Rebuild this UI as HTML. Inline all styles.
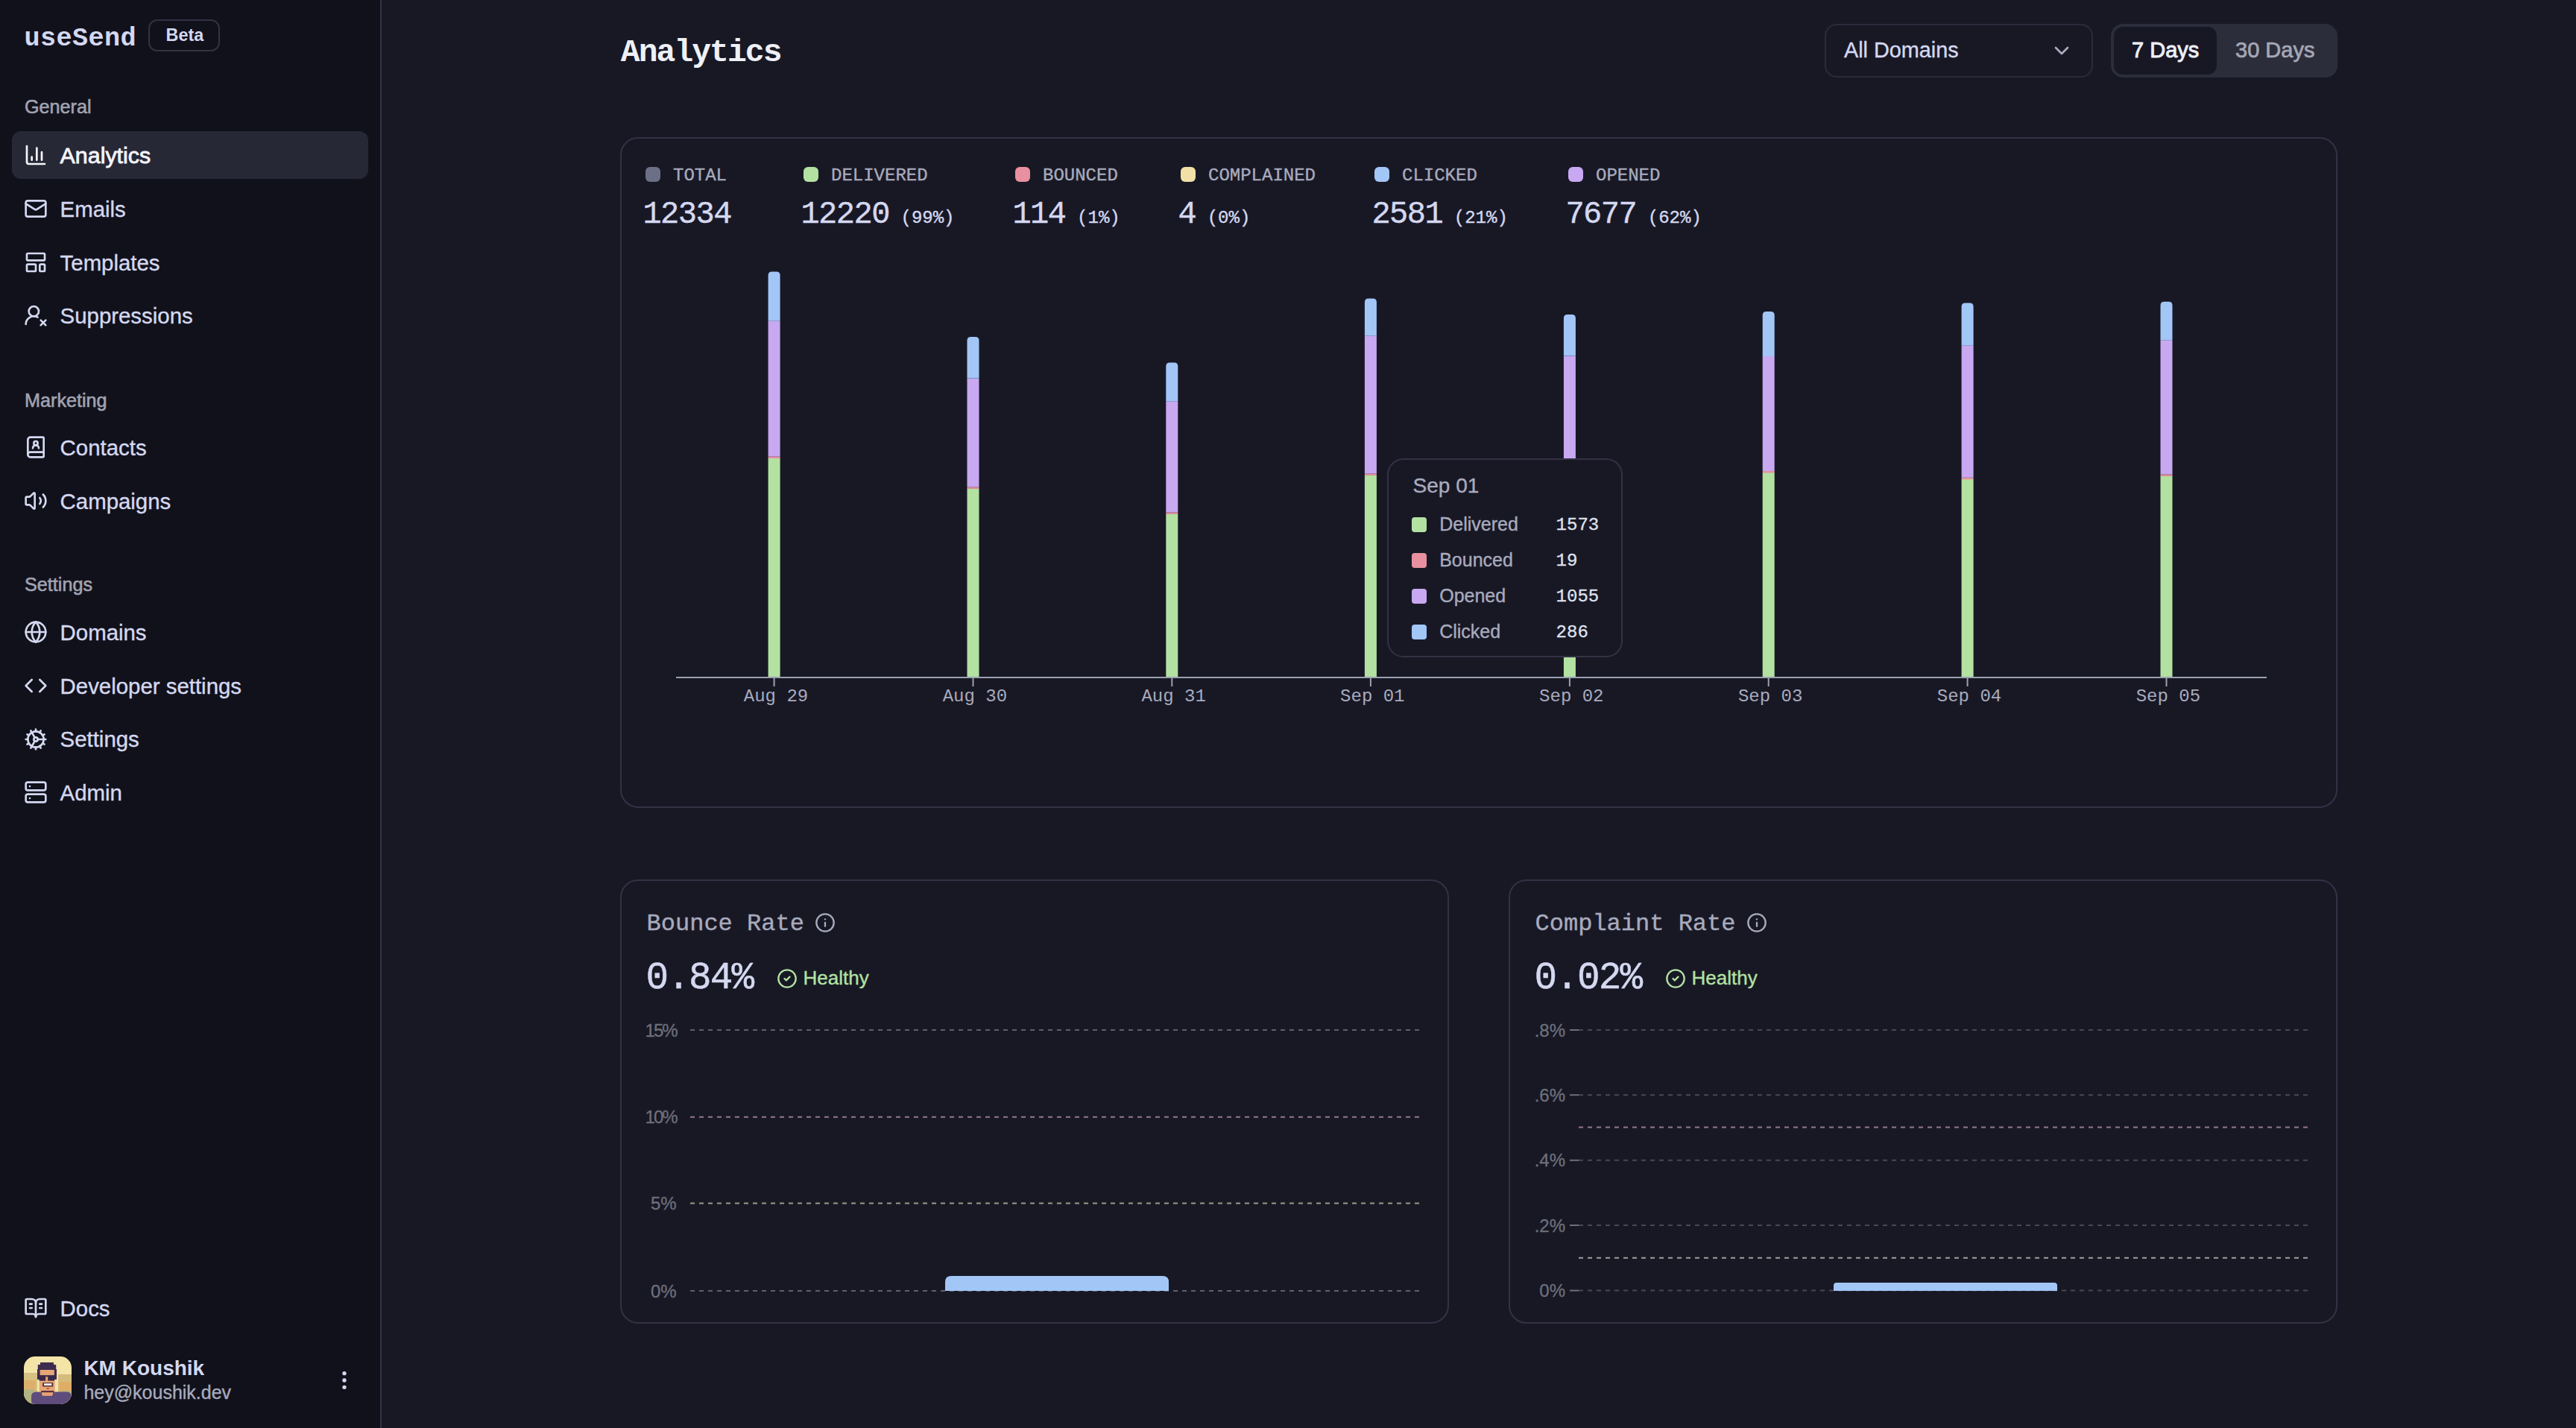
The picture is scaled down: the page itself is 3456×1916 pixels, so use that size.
<!DOCTYPE html><html><head><meta charset="utf-8"><style>
html{zoom:2;}
html,body{margin:0;padding:0;}
body{width:1728px;height:958px;overflow:hidden;position:relative;background:#181825;font-family:'Liberation Sans', sans-serif;}
.t{position:absolute;line-height:1;white-space:nowrap;}
.ic{position:absolute;}
.box{position:absolute;box-sizing:border-box;}
</style></head><body>
<div class="box" style="left:0;top:0;width:256px;height:958px;background:#11111b;border-right:1px solid #313244"></div>
<div class="t" style="left:16.20px;top:17.41px;font-size:17.6px;color:#d4d8f0;font-family:'Liberation Mono', monospace;font-weight:700;letter-spacing:0.2px">useSend</div>
<div class="box" style="left:99.7px;top:13.2px;width:48px;height:21.5px;border:1px solid #313244;border-radius:6px"></div>
<div class="t" style="left:111.30px;top:18.10px;font-size:11.7px;color:#d4d8f0;font-family:'Liberation Sans', sans-serif;font-weight:700;">Beta</div>
<div class="t" style="left:16.50px;top:65.53px;font-size:12.6px;color:#a0a3b1;font-family:'Liberation Sans', sans-serif;font-weight:400;-webkit-text-stroke:0.3px #a0a3b1">General</div>
<div class="box" style="left:8px;top:88px;width:239px;height:32px;background:#272836;border-radius:6px"></div>
<div class="t" style="left:16.50px;top:262.33px;font-size:12.6px;color:#a0a3b1;font-family:'Liberation Sans', sans-serif;font-weight:400;-webkit-text-stroke:0.3px #a0a3b1">Marketing</div>
<div class="t" style="left:16.50px;top:386.23px;font-size:12.6px;color:#a0a3b1;font-family:'Liberation Sans', sans-serif;font-weight:400;-webkit-text-stroke:0.3px #a0a3b1">Settings</div>
<svg class="ic" style="left:16px;top:95.95px" width="16" height="16" viewBox="0 0 24 24" fill="none" stroke="#f5f5fa" stroke-width="2" stroke-linecap="round" stroke-linejoin="round"><path d="M3 3v16a2 2 0 0 0 2 2h16"/><path d="M18 17V9"/><path d="M13 17V5"/><path d="M8 17v-3"/></svg>
<div class="t" style="left:40.30px;top:96.38px;font-size:15.2px;color:#f5f5fa;font-family:'Liberation Sans', sans-serif;font-weight:400;-webkit-text-stroke:0.4px #f5f5fa">Analytics</div>
<svg class="ic" style="left:16px;top:132.1px" width="16" height="16" viewBox="0 0 24 24" fill="none" stroke="#d4d8f0" stroke-width="2" stroke-linecap="round" stroke-linejoin="round"><rect width="20" height="16" x="2" y="4" rx="2"/><path d="m22 7-8.97 5.7a1.94 1.94 0 0 1-2.06 0L2 7"/></svg>
<div class="t" style="left:40.30px;top:132.96px;font-size:14.7px;color:#d4d8f0;font-family:'Liberation Sans', sans-serif;font-weight:400;-webkit-text-stroke:0.18px #d4d8f0;">Emails</div>
<svg class="ic" style="left:16px;top:168.2px" width="16" height="16" viewBox="0 0 24 24" fill="none" stroke="#d4d8f0" stroke-width="2" stroke-linecap="round" stroke-linejoin="round"><rect width="18" height="7" x="3" y="3" rx="1"/><rect width="9" height="7" x="3" y="14" rx="1"/><rect width="5" height="7" x="16" y="14" rx="1"/></svg>
<div class="t" style="left:40.30px;top:169.06px;font-size:14.7px;color:#d4d8f0;font-family:'Liberation Sans', sans-serif;font-weight:400;-webkit-text-stroke:0.18px #d4d8f0;">Templates</div>
<svg class="ic" style="left:16px;top:203.5px" width="16" height="16" viewBox="0 0 24 24" fill="none" stroke="#d4d8f0" stroke-width="2" stroke-linecap="round" stroke-linejoin="round"><path d="M2 21a8 8 0 0 1 11.873-7"/><circle cx="10" cy="8" r="5"/><path d="m17 17 5 5"/><path d="m22 17-5 5"/></svg>
<div class="t" style="left:40.30px;top:204.36px;font-size:14.7px;color:#d4d8f0;font-family:'Liberation Sans', sans-serif;font-weight:400;-webkit-text-stroke:0.18px #d4d8f0;">Suppressions</div>
<svg class="ic" style="left:16px;top:292.2px" width="16" height="16" viewBox="0 0 24 24" fill="none" stroke="#d4d8f0" stroke-width="2" stroke-linecap="round" stroke-linejoin="round"><path d="M15 13a3 3 0 1 0-6 0"/><path d="M4 19.5v-15A2.5 2.5 0 0 1 6.5 2H19a1 1 0 0 1 1 1v18a1 1 0 0 1-1 1H6.5a1 1 0 0 1 0-5H20"/><circle cx="12" cy="8" r="2"/></svg>
<div class="t" style="left:40.30px;top:293.06px;font-size:14.7px;color:#d4d8f0;font-family:'Liberation Sans', sans-serif;font-weight:400;-webkit-text-stroke:0.18px #d4d8f0;">Contacts</div>
<svg class="ic" style="left:16px;top:328.0px" width="16" height="16" viewBox="0 0 24 24" fill="none" stroke="#d4d8f0" stroke-width="2" stroke-linecap="round" stroke-linejoin="round"><path d="M11 4.702a.705.705 0 0 0-1.203-.498L6.413 7.587A1.4 1.4 0 0 1 5.416 8H3a1 1 0 0 0-1 1v6a1 1 0 0 0 1 1h2.416a1.4 1.4 0 0 1 .997.413l3.383 3.384A.705.705 0 0 0 11 19.298z"/><path d="M16 9a5 5 0 0 1 0 6"/><path d="M19.364 18.364a9 9 0 0 0 0-12.728"/></svg>
<div class="t" style="left:40.30px;top:328.86px;font-size:14.7px;color:#d4d8f0;font-family:'Liberation Sans', sans-serif;font-weight:400;-webkit-text-stroke:0.18px #d4d8f0;">Campaigns</div>
<svg class="ic" style="left:16px;top:416.09999999999997px" width="16" height="16" viewBox="0 0 24 24" fill="none" stroke="#d4d8f0" stroke-width="2" stroke-linecap="round" stroke-linejoin="round"><circle cx="12" cy="12" r="10"/><path d="M12 2a14.5 14.5 0 0 0 0 20 14.5 14.5 0 0 0 0-20"/><path d="M2 12h20"/></svg>
<div class="t" style="left:40.30px;top:416.96px;font-size:14.7px;color:#d4d8f0;font-family:'Liberation Sans', sans-serif;font-weight:400;-webkit-text-stroke:0.18px #d4d8f0;">Domains</div>
<svg class="ic" style="left:16px;top:451.9px" width="16" height="16" viewBox="0 0 24 24" fill="none" stroke="#d4d8f0" stroke-width="2" stroke-linecap="round" stroke-linejoin="round"><path d="m16 18 6-6-6-6"/><path d="m8 6-6 6 6 6"/></svg>
<div class="t" style="left:40.30px;top:452.76px;font-size:14.7px;color:#d4d8f0;font-family:'Liberation Sans', sans-serif;font-weight:400;-webkit-text-stroke:0.18px #d4d8f0;">Developer settings</div>
<svg class="ic" style="left:16px;top:487.8px" width="16" height="16" viewBox="0 0 24 24" fill="none" stroke="#d4d8f0" stroke-width="2" stroke-linecap="round" stroke-linejoin="round"><path d="M12 20a8 8 0 1 0 0-16 8 8 0 0 0 0 16Z"/><path d="M12 14a2 2 0 1 0 0-4 2 2 0 0 0 0 4Z"/><path d="M12 2v2"/><path d="M12 22v-2"/><path d="m17 20.66-1-1.73"/><path d="M11 10.27 7 3.34"/><path d="m20.66 17-1.73-1"/><path d="m3.34 7 1.73 1"/><path d="M14 12h8"/><path d="M2 12h2"/><path d="m20.66 7-1.73 1"/><path d="m3.34 17 1.73-1"/><path d="m17 3.34-1 1.73"/><path d="m11 13.73-4 6.93"/></svg>
<div class="t" style="left:40.30px;top:488.66px;font-size:14.7px;color:#d4d8f0;font-family:'Liberation Sans', sans-serif;font-weight:400;-webkit-text-stroke:0.18px #d4d8f0;">Settings</div>
<svg class="ic" style="left:16px;top:523.7px" width="16" height="16" viewBox="0 0 24 24" fill="none" stroke="#d4d8f0" stroke-width="2" stroke-linecap="round" stroke-linejoin="round"><rect width="20" height="8" x="2" y="2" rx="2" ry="2"/><rect width="20" height="8" x="2" y="14" rx="2" ry="2"/><line x1="6" x2="6.01" y1="6" y2="6"/><line x1="6" x2="6.01" y1="18" y2="18"/></svg>
<div class="t" style="left:40.30px;top:524.56px;font-size:14.7px;color:#d4d8f0;font-family:'Liberation Sans', sans-serif;font-weight:400;-webkit-text-stroke:0.18px #d4d8f0;">Admin</div>
<svg class="ic" style="left:16px;top:869.5px" width="16" height="16" viewBox="0 0 24 24" fill="none" stroke="#d4d8f0" stroke-width="2" stroke-linecap="round" stroke-linejoin="round"><path d="M12 7v14"/><path d="M16 12h2"/><path d="M16 8h2"/><path d="M3 18a1 1 0 0 1-1-1V4a1 1 0 0 1 1-1h5a4 4 0 0 1 4 4 4 4 0 0 1 4-4h5a1 1 0 0 1 1 1v13a1 1 0 0 1-1 1h-6a3 3 0 0 0-3 3 3 3 0 0 0-3-3z"/><path d="M6 12h2"/><path d="M6 8h2"/></svg>
<div class="t" style="left:40.30px;top:870.36px;font-size:14.7px;color:#d4d8f0;font-family:'Liberation Sans', sans-serif;font-weight:400;-webkit-text-stroke:0.18px #d4d8f0;">Docs</div>
<svg class="ic" style="left:16px;top:910px;filter:blur(0.25px)" width="32" height="32" viewBox="0 0 32 32"><defs><clipPath id="av"><rect width="32" height="32" rx="7.5"/></clipPath></defs><g clip-path="url(#av)"><rect width="32" height="32" fill="#f3e4a8"/><rect x="0" y="11" width="9" height="21" fill="#d6c282"/><rect x="0" y="16" width="8" height="8" fill="#dcb06c"/><rect x="0" y="22" width="7" height="10" fill="#b2b482"/><rect x="23" y="12" width="9" height="20" fill="#d4bc7c"/><rect x="24" y="17" width="8" height="7" fill="#dfad66"/><rect x="25" y="23" width="7" height="9" fill="#b8b27e"/><rect x="5" y="23.8" width="27" height="9" rx="3" fill="#5e4c7c"/><rect x="12.5" y="23" width="6.5" height="3.5" fill="#e09a70"/><rect x="10.4" y="8.5" width="10.4" height="15.5" fill="#e6a676"/><rect x="12" y="23.5" width="7.5" height="2.2" fill="#e6a676"/><rect x="11" y="4" width="9" height="2" fill="#3e2b4f"/><rect x="9.4" y="5.5" width="12.2" height="3.5" fill="#3e2b4f"/><rect x="9" y="8.5" width="1.8" height="7" fill="#3e2b4f"/><rect x="20.4" y="8.5" width="1.6" height="7" fill="#3e2b4f"/><rect x="9" y="12.6" width="13" height="1" fill="#3a2848"/><rect x="10.3" y="12.8" width="4.3" height="3.5" fill="#3a2848"/><rect x="16.1" y="12.8" width="4.4" height="3.5" fill="#3a2848"/><rect x="12.6" y="17.6" width="7" height="2.6" fill="#4a2838"/><rect x="13.5" y="18.1" width="5.2" height="1.4" fill="#f6eee4"/><rect x="15.3" y="21" width="1.6" height="1" fill="#b85a4a"/><rect x="11.6" y="23" width="8.6" height="1.1" fill="#5a3040"/></g></svg>
<div class="t" style="left:56.20px;top:911.05px;font-size:14px;color:#d4d8f0;font-family:'Liberation Sans', sans-serif;font-weight:700;">KM Koushik</div>
<div class="t" style="left:56.20px;top:928.22px;font-size:12.5px;color:#a8abbd;font-family:'Liberation Sans', sans-serif;font-weight:400;-webkit-text-stroke:0.18px #a8abbd;">hey@koushik.dev</div>
<svg class="ic" style="left:223px;top:918px" width="16" height="16" viewBox="0 0 24 24" fill="none" stroke="#d4d8f0" stroke-width="2" stroke-linecap="round" stroke-linejoin="round"><circle cx="12" cy="12" r="1"/><circle cx="12" cy="5" r="1"/><circle cx="12" cy="19" r="1"/></svg>
<div class="t" style="left:416.40px;top:24.67px;font-size:21.5px;color:#eef0f6;font-family:'Liberation Mono', monospace;font-weight:700;letter-spacing:-0.97px">Analytics</div>
<div class="box" style="left:1224px;top:16px;width:180px;height:36px;border:1px solid #2a2b3a;border-radius:8px"></div>
<div class="t" style="left:1237.00px;top:26.61px;font-size:14.4px;color:#d4d8f0;font-family:'Liberation Sans', sans-serif;font-weight:400;-webkit-text-stroke:0.18px #d4d8f0;">All Domains</div>
<svg class="ic" style="left:1375px;top:26px" width="16" height="16" viewBox="0 0 24 24" fill="none" stroke="#a8abbd" stroke-width="2" stroke-linecap="round" stroke-linejoin="round"><path d="m6 9 6 6 6-6"/></svg>
<div class="box" style="left:1416px;top:16px;width:152px;height:36px;background:#2c2d3b;border-radius:8px"></div>
<div class="box" style="left:1418px;top:18px;width:69px;height:32px;background:#181825;border-radius:6px"></div>
<div class="t" style="left:1430.00px;top:26.53px;font-size:14.5px;color:#eef0f6;font-family:'Liberation Sans', sans-serif;font-weight:400;-webkit-text-stroke:0.45px #eef0f6">7 Days</div>
<div class="t" style="left:1499.50px;top:26.53px;font-size:14.5px;color:#a4a7b5;font-family:'Liberation Sans', sans-serif;font-weight:400;-webkit-text-stroke:0.35px #a4a7b5">30 Days</div>
<div class="box" style="left:416px;top:92px;width:1152px;height:450px;border:1px solid #313244;border-radius:12px"></div>
<div class="box" style="left:433px;top:112px;width:10px;height:10px;background:#6c7086;border-radius:3px"></div>
<div class="t" style="left:451.50px;top:112.00px;font-size:12px;color:#a8abbd;font-family:'Liberation Mono', monospace;font-weight:400;-webkit-text-stroke:0.18px #a8abbd;">TOTAL</div>
<div class="t" style="left:431.20px;top:133.30px;font-size:21px;color:#d4d8f0;font-family:'Liberation Mono', monospace;font-weight:400;letter-spacing:-0.75px;-webkit-text-stroke:0.2px #d4d8f0">12334</div>
<div class="box" style="left:539px;top:112px;width:10px;height:10px;background:#b3e1a2;border-radius:3px"></div>
<div class="t" style="left:557.50px;top:112.00px;font-size:12px;color:#a8abbd;font-family:'Liberation Mono', monospace;font-weight:400;-webkit-text-stroke:0.18px #a8abbd;">DELIVERED</div>
<div class="t" style="left:537.20px;top:133.30px;font-size:21px;color:#d4d8f0;font-family:'Liberation Mono', monospace;font-weight:400;letter-spacing:-0.75px;-webkit-text-stroke:0.2px #d4d8f0">12220</div>
<div class="t" style="left:604.25px;top:140.70px;font-size:12px;color:#d4d8f0;font-family:'Liberation Mono', monospace;font-weight:400;-webkit-text-stroke:0.18px #d4d8f0;">(99%)</div>
<div class="box" style="left:681px;top:112px;width:10px;height:10px;background:#e8909f;border-radius:3px"></div>
<div class="t" style="left:699.50px;top:112.00px;font-size:12px;color:#a8abbd;font-family:'Liberation Mono', monospace;font-weight:400;-webkit-text-stroke:0.18px #a8abbd;">BOUNCED</div>
<div class="t" style="left:679.20px;top:133.30px;font-size:21px;color:#d4d8f0;font-family:'Liberation Mono', monospace;font-weight:400;letter-spacing:-0.75px;-webkit-text-stroke:0.2px #d4d8f0">114</div>
<div class="t" style="left:722.55px;top:140.70px;font-size:12px;color:#d4d8f0;font-family:'Liberation Mono', monospace;font-weight:400;-webkit-text-stroke:0.18px #d4d8f0;">(1%)</div>
<div class="box" style="left:792px;top:112px;width:10px;height:10px;background:#f1e1a6;border-radius:3px"></div>
<div class="t" style="left:810.50px;top:112.00px;font-size:12px;color:#a8abbd;font-family:'Liberation Mono', monospace;font-weight:400;-webkit-text-stroke:0.18px #a8abbd;">COMPLAINED</div>
<div class="t" style="left:790.20px;top:133.30px;font-size:21px;color:#d4d8f0;font-family:'Liberation Mono', monospace;font-weight:400;letter-spacing:-0.75px;-webkit-text-stroke:0.2px #d4d8f0">4</div>
<div class="t" style="left:809.85px;top:140.70px;font-size:12px;color:#d4d8f0;font-family:'Liberation Mono', monospace;font-weight:400;-webkit-text-stroke:0.18px #d4d8f0;">(0%)</div>
<div class="box" style="left:922px;top:112px;width:10px;height:10px;background:#a2c6f6;border-radius:3px"></div>
<div class="t" style="left:940.50px;top:112.00px;font-size:12px;color:#a8abbd;font-family:'Liberation Mono', monospace;font-weight:400;-webkit-text-stroke:0.18px #a8abbd;">CLICKED</div>
<div class="t" style="left:920.20px;top:133.30px;font-size:21px;color:#d4d8f0;font-family:'Liberation Mono', monospace;font-weight:400;letter-spacing:-0.75px;-webkit-text-stroke:0.2px #d4d8f0">2581</div>
<div class="t" style="left:975.40px;top:140.70px;font-size:12px;color:#d4d8f0;font-family:'Liberation Mono', monospace;font-weight:400;-webkit-text-stroke:0.18px #d4d8f0;">(21%)</div>
<div class="box" style="left:1052px;top:112px;width:10px;height:10px;background:#c7a8f1;border-radius:3px"></div>
<div class="t" style="left:1070.50px;top:112.00px;font-size:12px;color:#a8abbd;font-family:'Liberation Mono', monospace;font-weight:400;-webkit-text-stroke:0.18px #a8abbd;">OPENED</div>
<div class="t" style="left:1050.20px;top:133.30px;font-size:21px;color:#d4d8f0;font-family:'Liberation Mono', monospace;font-weight:400;letter-spacing:-0.75px;-webkit-text-stroke:0.2px #d4d8f0">7677</div>
<div class="t" style="left:1105.40px;top:140.70px;font-size:12px;color:#d4d8f0;font-family:'Liberation Mono', monospace;font-weight:400;-webkit-text-stroke:0.18px #d4d8f0;">(62%)</div>
<svg class="ic" style="left:0;top:0" width="1728" height="958" viewBox="0 0 1728 958"><rect x="515.3" y="307.3" width="8" height="147.2" fill="#b3e1a2"/><rect x="515.3" y="306.3" width="8" height="1.2" fill="#e8909f"/><rect x="515.3" y="215.2" width="8" height="91.10000000000002" fill="#c7a8f1"/><path d="M515.3 215.2 V184.7 Q515.3 182.2 517.8 182.2 H520.8 Q523.3 182.2 523.3 184.7 V215.2 Z" fill="#a2c6f6"/><line x1="519.3" x2="519.3" y1="454.5" y2="460.5" stroke="#9ca0b0" stroke-width="1"/><rect x="648.75" y="327.7" width="8" height="126.80000000000001" fill="#b3e1a2"/><rect x="648.75" y="326.7" width="8" height="1.2" fill="#e8909f"/><rect x="648.75" y="253.8" width="8" height="72.89999999999998" fill="#c7a8f1"/><path d="M648.75 253.8 V228.5 Q648.75 226 651.25 226 H654.25 Q656.75 226 656.75 228.5 V253.8 Z" fill="#a2c6f6"/><line x1="652.75" x2="652.75" y1="454.5" y2="460.5" stroke="#9ca0b0" stroke-width="1"/><rect x="782.15" y="344.7" width="8" height="109.80000000000001" fill="#b3e1a2"/><rect x="782.15" y="343.7" width="8" height="1.2" fill="#e8909f"/><rect x="782.15" y="269.2" width="8" height="74.5" fill="#c7a8f1"/><path d="M782.15 269.2 V245.7 Q782.15 243.2 784.65 243.2 H787.65 Q790.15 243.2 790.15 245.7 V269.2 Z" fill="#a2c6f6"/><line x1="786.15" x2="786.15" y1="454.5" y2="460.5" stroke="#9ca0b0" stroke-width="1"/><rect x="915.45" y="318.7" width="8" height="135.8" fill="#b3e1a2"/><rect x="915.45" y="317.7" width="8" height="1.2" fill="#e8909f"/><rect x="915.45" y="225.2" width="8" height="92.5" fill="#c7a8f1"/><path d="M915.45 225.2 V202.7 Q915.45 200.2 917.95 200.2 H920.95 Q923.45 200.2 923.45 202.7 V225.2 Z" fill="#a2c6f6"/><line x1="919.45" x2="919.45" y1="454.5" y2="460.5" stroke="#9ca0b0" stroke-width="1"/><rect x="1048.95" y="323.0" width="8" height="131.5" fill="#b3e1a2"/><rect x="1048.95" y="322.0" width="8" height="1.2" fill="#e8909f"/><rect x="1048.95" y="238.8" width="8" height="83.19999999999999" fill="#c7a8f1"/><path d="M1048.95 238.8 V213.5 Q1048.95 211 1051.45 211 H1054.45 Q1056.95 211 1056.95 213.5 V238.8 Z" fill="#a2c6f6"/><line x1="1052.95" x2="1052.95" y1="454.5" y2="460.5" stroke="#9ca0b0" stroke-width="1"/><rect x="1182.35" y="317" width="8" height="137.5" fill="#b3e1a2"/><rect x="1182.35" y="316" width="8" height="1.2" fill="#e8909f"/><rect x="1182.35" y="239" width="8" height="77" fill="#c7a8f1"/><path d="M1182.35 239 V211.5 Q1182.35 209 1184.85 209 H1187.85 Q1190.35 209 1190.35 211.5 V239 Z" fill="#a2c6f6"/><line x1="1186.35" x2="1186.35" y1="454.5" y2="460.5" stroke="#9ca0b0" stroke-width="1"/><rect x="1315.8" y="321.4" width="8" height="133.10000000000002" fill="#b3e1a2"/><rect x="1315.8" y="320.4" width="8" height="1.2" fill="#e8909f"/><rect x="1315.8" y="231.7" width="8" height="88.69999999999999" fill="#c7a8f1"/><path d="M1315.8 231.7 V205.7 Q1315.8 203.2 1318.3 203.2 H1321.3 Q1323.8 203.2 1323.8 205.7 V231.7 Z" fill="#a2c6f6"/><line x1="1319.8" x2="1319.8" y1="454.5" y2="460.5" stroke="#9ca0b0" stroke-width="1"/><rect x="1449.25" y="319.2" width="8" height="135.3" fill="#b3e1a2"/><rect x="1449.25" y="318.2" width="8" height="1.2" fill="#e8909f"/><rect x="1449.25" y="228.2" width="8" height="90.0" fill="#c7a8f1"/><path d="M1449.25 228.2 V204.9 Q1449.25 202.4 1451.75 202.4 H1454.75 Q1457.25 202.4 1457.25 204.9 V228.2 Z" fill="#a2c6f6"/><line x1="1453.25" x2="1453.25" y1="454.5" y2="460.5" stroke="#9ca0b0" stroke-width="1"/><line x1="453.5" x2="1520.5" y1="454.5" y2="454.5" stroke="#9ca0b0" stroke-width="1"/></svg>
<div class="t" style="left:480.5px;width:80px;text-align:center;top:461.30px;font-size:12px;color:#a8abbd;font-family:'Liberation Mono', monospace">Aug 29</div>
<div class="t" style="left:613.95px;width:80px;text-align:center;top:461.30px;font-size:12px;color:#a8abbd;font-family:'Liberation Mono', monospace">Aug 30</div>
<div class="t" style="left:747.35px;width:80px;text-align:center;top:461.30px;font-size:12px;color:#a8abbd;font-family:'Liberation Mono', monospace">Aug 31</div>
<div class="t" style="left:880.6500000000001px;width:80px;text-align:center;top:461.30px;font-size:12px;color:#a8abbd;font-family:'Liberation Mono', monospace">Sep 01</div>
<div class="t" style="left:1014.1500000000001px;width:80px;text-align:center;top:461.30px;font-size:12px;color:#a8abbd;font-family:'Liberation Mono', monospace">Sep 02</div>
<div class="t" style="left:1147.55px;width:80px;text-align:center;top:461.30px;font-size:12px;color:#a8abbd;font-family:'Liberation Mono', monospace">Sep 03</div>
<div class="t" style="left:1281.0px;width:80px;text-align:center;top:461.30px;font-size:12px;color:#a8abbd;font-family:'Liberation Mono', monospace">Sep 04</div>
<div class="t" style="left:1414.45px;width:80px;text-align:center;top:461.30px;font-size:12px;color:#a8abbd;font-family:'Liberation Mono', monospace">Sep 05</div>
<div class="box" style="left:930.5px;top:307.3px;width:158px;height:133.5px;background:#181825;border:1px solid #313244;border-radius:11px"></div>
<div class="t" style="left:947.80px;top:319.15px;font-size:14px;color:#a8abbd;font-family:'Liberation Sans', sans-serif;font-weight:400;-webkit-text-stroke:0.18px #a8abbd;">Sep 01</div>
<div class="box" style="left:947.2px;top:347px;width:10px;height:10px;background:#b3e1a2;border-radius:2px"></div>
<div class="t" style="left:965.60px;top:345.27px;font-size:12.5px;color:#a8abbd;font-family:'Liberation Sans', sans-serif;font-weight:400;-webkit-text-stroke:0.18px #a8abbd;">Delivered</div>
<div class="t" style="left:1043.80px;top:346.65px;font-size:12px;color:#dfe1ee;font-family:'Liberation Mono', monospace;font-weight:400;-webkit-text-stroke:0.15px #dfe1ee">1573</div>
<div class="box" style="left:947.2px;top:371px;width:10px;height:10px;background:#e8909f;border-radius:2px"></div>
<div class="t" style="left:965.60px;top:369.27px;font-size:12.5px;color:#a8abbd;font-family:'Liberation Sans', sans-serif;font-weight:400;-webkit-text-stroke:0.18px #a8abbd;">Bounced</div>
<div class="t" style="left:1043.80px;top:370.65px;font-size:12px;color:#dfe1ee;font-family:'Liberation Mono', monospace;font-weight:400;-webkit-text-stroke:0.15px #dfe1ee">19</div>
<div class="box" style="left:947.2px;top:395px;width:10px;height:10px;background:#c7a8f1;border-radius:2px"></div>
<div class="t" style="left:965.60px;top:393.27px;font-size:12.5px;color:#a8abbd;font-family:'Liberation Sans', sans-serif;font-weight:400;-webkit-text-stroke:0.18px #a8abbd;">Opened</div>
<div class="t" style="left:1043.80px;top:394.65px;font-size:12px;color:#dfe1ee;font-family:'Liberation Mono', monospace;font-weight:400;-webkit-text-stroke:0.15px #dfe1ee">1055</div>
<div class="box" style="left:947.2px;top:419px;width:10px;height:10px;background:#a2c6f6;border-radius:2px"></div>
<div class="t" style="left:965.60px;top:417.27px;font-size:12.5px;color:#a8abbd;font-family:'Liberation Sans', sans-serif;font-weight:400;-webkit-text-stroke:0.18px #a8abbd;">Clicked</div>
<div class="t" style="left:1043.80px;top:418.65px;font-size:12px;color:#dfe1ee;font-family:'Liberation Mono', monospace;font-weight:400;-webkit-text-stroke:0.15px #dfe1ee">286</div>
<div class="box" style="left:416px;top:590px;width:556px;height:298px;border:1px solid #313244;border-radius:12px"></div>
<div class="t" style="left:433.80px;top:612.24px;font-size:16px;color:#a8abbd;font-family:'Liberation Mono', monospace;font-weight:400;-webkit-text-stroke:0.18px #a8abbd;">Bounce Rate</div>
<svg class="ic" style="left:546.6px;top:612px" width="14" height="14" viewBox="0 0 24 24" fill="none" stroke="#a8abbd" stroke-width="2" stroke-linecap="round" stroke-linejoin="round"><circle cx="12" cy="12" r="10"/><path d="M12 16v-4"/><path d="M12 8h.01"/></svg>
<div class="t" style="left:433.20px;top:643.55px;font-size:25.5px;color:#d4d8f0;font-family:'Liberation Mono', monospace;font-weight:400;letter-spacing:-0.9px;-webkit-text-stroke:0.25px #d4d8f0">0.84%</div>
<svg class="ic" style="left:521.2px;top:649.5px" width="14" height="14" viewBox="0 0 24 24" fill="none" stroke="#b3e1a2" stroke-width="2" stroke-linecap="round" stroke-linejoin="round"><circle cx="12" cy="12" r="10"/><path d="m9 12 2 2 4-4"/></svg>
<div class="t" style="left:538.80px;top:649.50px;font-size:13px;color:#b3e1a2;font-family:'Liberation Sans', sans-serif;font-weight:400;-webkit-text-stroke:0.18px #b3e1a2;">Healthy</div>
<div class="box" style="left:1012px;top:590px;width:556px;height:298px;border:1px solid #313244;border-radius:12px"></div>
<div class="t" style="left:1029.80px;top:612.24px;font-size:16px;color:#a8abbd;font-family:'Liberation Mono', monospace;font-weight:400;-webkit-text-stroke:0.18px #a8abbd;">Complaint Rate</div>
<svg class="ic" style="left:1171.4px;top:612px" width="14" height="14" viewBox="0 0 24 24" fill="none" stroke="#a8abbd" stroke-width="2" stroke-linecap="round" stroke-linejoin="round"><circle cx="12" cy="12" r="10"/><path d="M12 16v-4"/><path d="M12 8h.01"/></svg>
<div class="t" style="left:1029.20px;top:643.55px;font-size:25.5px;color:#d4d8f0;font-family:'Liberation Mono', monospace;font-weight:400;letter-spacing:-0.9px;-webkit-text-stroke:0.25px #d4d8f0">0.02%</div>
<svg class="ic" style="left:1117.2px;top:649.5px" width="14" height="14" viewBox="0 0 24 24" fill="none" stroke="#b3e1a2" stroke-width="2" stroke-linecap="round" stroke-linejoin="round"><circle cx="12" cy="12" r="10"/><path d="m9 12 2 2 4-4"/></svg>
<div class="t" style="left:1134.80px;top:649.50px;font-size:13px;color:#b3e1a2;font-family:'Liberation Sans', sans-serif;font-weight:400;-webkit-text-stroke:0.18px #b3e1a2;">Healthy</div>
<svg class="ic" style="left:0;top:0" width="1728" height="958" viewBox="0 0 1728 958"><line x1="463" x2="952" y1="691" y2="691" stroke="#5c5f6e" stroke-width="1" stroke-dasharray="3 3"/><line x1="463" x2="952" y1="749.4" y2="749.4" stroke="#94788c" stroke-width="1" stroke-dasharray="3 3"/><line x1="463" x2="952" y1="807.3" y2="807.3" stroke="#9a9a85" stroke-width="1" stroke-dasharray="3 3"/><line x1="463" x2="952" y1="866" y2="866" stroke="#5c5f6e" stroke-width="1" stroke-dasharray="3 3"/><path d="M634 866 V860 Q634 856 638 856 H780 Q784 856 784 860 V866 Z" fill="#a2c6f6"/><line x1="1059" x2="1548" y1="691" y2="691" stroke="#464854" stroke-width="1" stroke-dasharray="3 3"/><line x1="1053" x2="1059" y1="691" y2="691" stroke="#6c6f7e" stroke-width="1"/><line x1="1059" x2="1548" y1="734.6" y2="734.6" stroke="#464854" stroke-width="1" stroke-dasharray="3 3"/><line x1="1053" x2="1059" y1="734.6" y2="734.6" stroke="#6c6f7e" stroke-width="1"/><line x1="1059" x2="1548" y1="778.4" y2="778.4" stroke="#464854" stroke-width="1" stroke-dasharray="3 3"/><line x1="1053" x2="1059" y1="778.4" y2="778.4" stroke="#6c6f7e" stroke-width="1"/><line x1="1059" x2="1548" y1="822" y2="822" stroke="#464854" stroke-width="1" stroke-dasharray="3 3"/><line x1="1053" x2="1059" y1="822" y2="822" stroke="#6c6f7e" stroke-width="1"/><line x1="1059" x2="1548" y1="865.8" y2="865.8" stroke="#464854" stroke-width="1" stroke-dasharray="3 3"/><line x1="1053" x2="1059" y1="865.8" y2="865.8" stroke="#6c6f7e" stroke-width="1"/><line x1="1059" x2="1548" y1="756.3" y2="756.3" stroke="#94788c" stroke-width="1" stroke-dasharray="3 3"/><line x1="1059" x2="1548" y1="843.9" y2="843.9" stroke="#a0a0a0" stroke-width="1" stroke-dasharray="3 3"/><path d="M1230 866 V862.5 Q1230 860.5 1232 860.5 H1378 Q1380 860.5 1380 862.5 V866 Z" fill="#a2c6f6"/></svg>
<div class="t" style="left:393.8px;width:60px;text-align:right;top:685.34px;font-size:12px;color:#6e707c;letter-spacing:-1px;-webkit-text-stroke:0.15px #6e707c">15%</div>
<div class="t" style="left:393.8px;width:60px;text-align:right;top:743.74px;font-size:12px;color:#6e707c;letter-spacing:-1px;-webkit-text-stroke:0.15px #6e707c">10%</div>
<div class="t" style="left:393.8px;width:60px;text-align:right;top:801.64px;font-size:12px;color:#6e707c;-webkit-text-stroke:0.15px #6e707c">5%</div>
<div class="t" style="left:393.8px;width:60px;text-align:right;top:860.34px;font-size:12px;color:#6e707c;-webkit-text-stroke:0.15px #6e707c">0%</div>
<div class="t" style="left:990px;width:60px;text-align:right;top:685.34px;font-size:12px;color:#6e707c;-webkit-text-stroke:0.15px #6e707c">.8%</div>
<div class="t" style="left:990px;width:60px;text-align:right;top:728.94px;font-size:12px;color:#6e707c;-webkit-text-stroke:0.15px #6e707c">.6%</div>
<div class="t" style="left:990px;width:60px;text-align:right;top:772.74px;font-size:12px;color:#6e707c;-webkit-text-stroke:0.15px #6e707c">.4%</div>
<div class="t" style="left:990px;width:60px;text-align:right;top:816.34px;font-size:12px;color:#6e707c;-webkit-text-stroke:0.15px #6e707c">.2%</div>
<div class="t" style="left:990px;width:60px;text-align:right;top:860.14px;font-size:12px;color:#6e707c;-webkit-text-stroke:0.15px #6e707c">0%</div>
</body></html>
